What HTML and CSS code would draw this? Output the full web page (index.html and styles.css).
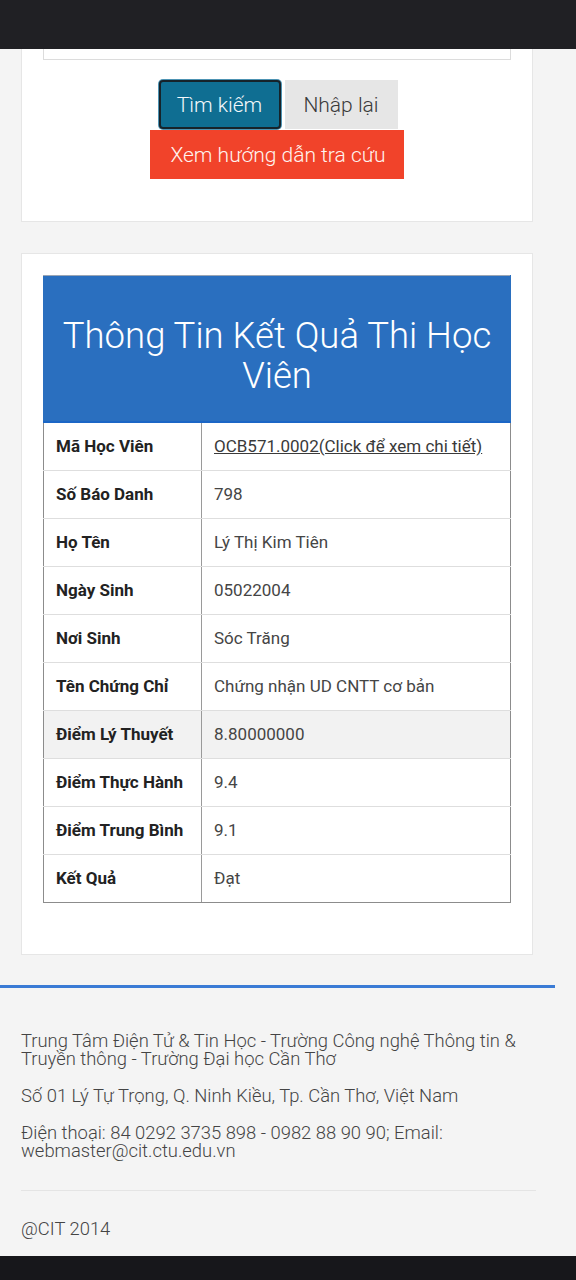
FILE: index.html
```html
<!DOCTYPE html>
<html lang="vi">
<head>
<meta charset="utf-8">
<title>Thông Tin Kết Quả Thi Học Viên</title>
<link rel="stylesheet" href="styles.css">
</head>
<body>
<div class="topbar"></div>
<main class="main">
  <section class="card card-search">
    <div class="input-box"></div>
    <div class="actions">
      <div class="btn-row">
        <button class="btn btn-primary">Tìm kiếm</button>
        <button class="btn btn-default">Nhập lại</button>
      </div>
      <button class="btn btn-danger">Xem hướng dẫn tra cứu</button>
    </div>
  </section>

  <section class="card card-result">
    <table class="result">
      <thead>
        <tr><th colspan="2" class="result-title">Thông Tin Kết Quả Thi Học Viên</th></tr>
      </thead>
      <tbody>
        <tr><td class="lbl">Mã Học Viên</td><td class="val"><a class="link" href="#">OCB571.0002(Click để xem chi tiết)</a></td></tr>
        <tr><td class="lbl">Số Báo Danh</td><td class="val">798</td></tr>
        <tr><td class="lbl">Họ Tên</td><td class="val">Lý Thị Kim Tiên</td></tr>
        <tr><td class="lbl">Ngày Sinh</td><td class="val">05022004</td></tr>
        <tr><td class="lbl">Nơi Sinh</td><td class="val">Sóc Trăng</td></tr>
        <tr><td class="lbl">Tên Chứng Chỉ</td><td class="val">Chứng nhận UD CNTT cơ bản</td></tr>
        <tr class="hl"><td class="lbl">Điểm Lý Thuyết</td><td class="val">8.80000000</td></tr>
        <tr><td class="lbl">Điểm Thực Hành</td><td class="val">9.4</td></tr>
        <tr><td class="lbl">Điểm Trung Bình</td><td class="val">9.1</td></tr>
        <tr><td class="lbl">Kết Quả</td><td class="val">Đạt</td></tr>
      </tbody>
    </table>
  </section>
</main>

<footer class="footer">
  <div class="footer-line"></div>
  <div class="footer-body">
    <p>Trung Tâm Điện Tử &amp; Tin Học - Trường Công nghệ Thông tin &amp; Truyền thông - Trường Đại học Cần Thơ</p>
    <p>Số 01 Lý Tự Trọng, Q. Ninh Kiều, Tp. Cần Thơ, Việt Nam</p>
    <p>Điện thoại: 84 0292 3735 898 - 0982 88 90 90; Email: webmaster@cit.ctu.edu.vn</p>
    <hr class="footer-hr">
    <p class="copy">@CIT 2014</p>
  </div>
</footer>
<div class="bottombar"></div>
</body>
</html>
```

FILE: styles.css
```css
html, body {
  margin: 0;
  padding: 0;
}
body {
  background: #f4f4f4;
  font-family: Roboto, "Noto Sans", "Liberation Sans", sans-serif;
  color: #333;
  width: 576px;
}
.topbar {
  height: 49px;
  background: #202024;
}
.main {
  padding: 0 43px 0 21px;
}
.card {
  background: #fff;
  border: 1px solid #e6e6e6;
  box-sizing: border-box;
  width: 512px;
}
.card-search {
  border-top: none;
  padding: 0 21px 42px 21px;
}
.input-box {
  height: 10px;
  border: 1px solid #dcdcdc;
  border-top: none;
}
.actions {
  margin-top: 20px;
  display: flex;
  flex-direction: column;
  align-items: center;
}
.btn-row {
  display: flex;
  gap: 4px;
  margin-left: 2px;
}
.btn {
  font-family: Roboto, "Noto Sans", sans-serif;
  font-size: 21px;
  font-weight: 300;
  height: 49px;
  border: none;
  padding: 0;
  margin: 0;
  cursor: pointer;
}
.btn-primary {
  width: 122px;
  background: #0f6e92;
  color: #f4f8fb;
  border: 2px solid #16232a;
  border-radius: 4px;
  box-shadow: 0 0 0 1px #4d93b3;
}
.btn-default {
  width: 113px;
  background: #e6e6e6;
  color: #3a3a3a;
}
.btn-danger {
  width: 254px;
  background: #f1432a;
  color: #fff3ef;
  margin-top: 1px;
  padding-left: 2px;
}
.card-result {
  margin-top: 31px;
  padding: 21px 21px 51px 21px;
}
.result {
  width: 468px;
  border-collapse: collapse;
  font-size: 17px;
}
.result-title {
  background: #2a6fbf;
  color: #fff;
  font-weight: 300;
  font-size: 36.5px;
  line-height: 40px;
  padding: 40px 8px 25px;
  border-top: 1px solid #9aa5b4;
  border-bottom: 2px solid #1b66c6;
  border-left: 1px solid #2a6fbf;
  border-right: 1px solid #2a6fbf;
}
.result td {
  height: 48px;
  box-sizing: border-box;
  padding: 0 12px;
  border-top: 1px solid #dedede;
  border-bottom: 1px solid #dedede;
  vertical-align: middle;
}
.result tbody tr:first-child td {
  border-top: none;
}
.result tbody tr:last-child td {
  border-bottom: 1px solid #8c8c8c;
}
.lbl {
  width: 158px;
  font-weight: 700;
  color: #222;
  border-left: 1px solid #8c8c8c;
  border-right: 1px solid #9a9a9a;
}
.val {
  color: #454545;
  border-right: 1px solid #8c8c8c;
}
.hl td {
  background: #f2f2f2;
}
.link {
  color: #3a3a3a;
  text-decoration: underline;
}
.footer {
  margin-top: 30px;
}
.footer-line {
  width: 555px;
  height: 3px;
  background: #3a7bd5;
}
.footer-body {
  padding: 44px 36px 18px 21px;
  color: #444;
  font-size: 18.4px;
  font-weight: 300;
  line-height: 18px;
}
.footer-body p {
  margin: 0 0 19px 0;
}
.footer-hr {
  border: none;
  border-top: 1px solid #e4e4e4;
  margin: 30px 0 29px 0;
  width: 515px;
}
.footer-body .copy {
  margin: 0;
}
.bottombar {
  height: 24px;
  background: #17171b;
}
```
